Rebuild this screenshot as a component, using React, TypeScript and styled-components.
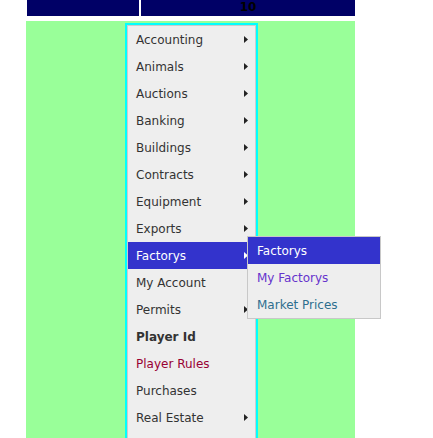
import React from "react";
import styled, { createGlobalStyle } from "styled-components";

const GlobalStyle = createGlobalStyle`
  html, body {
    margin: 0;
    padding: 0;
    background: #fff;
    overflow: hidden;
  }
  body {
    font-family: "DejaVu Sans", Verdana, sans-serif;
    font-size: 12px;
  }
`;

type Item = {
  label: string;
  sub?: boolean;
  bold?: boolean;
  color?: string;
  active?: boolean;
};

const items: Item[] = [
  { label: "Accounting", sub: true },
  { label: "Animals", sub: true },
  { label: "Auctions", sub: true },
  { label: "Banking", sub: true },
  { label: "Buildings", sub: true },
  { label: "Contracts", sub: true },
  { label: "Equipment", sub: true },
  { label: "Exports", sub: true },
  { label: "Factorys", sub: true, active: true },
  { label: "My Account" },
  { label: "Permits", sub: true },
  { label: "Player Id", bold: true },
  { label: "Player Rules", color: "#990033" },
  { label: "Purchases" },
  { label: "Real Estate", sub: true },
];

const subItems: Item[] = [
  { label: "Factorys", active: true },
  { label: "My Factorys", color: "#6633cc" },
  { label: "Market Prices", color: "#2e6e8e" },
];

export default function App() {
  return (
    <>
      <GlobalStyle />
      <Page>
        <Header>
          <HeadCell width="112px" />
          <HeadCell width="214px">10</HeadCell>
        </Header>
        <Content>
          <Menu>
            {items.map((it) => (
              <MenuItem key={it.label} $active={it.active} $bold={it.bold} $color={it.color}>
                {it.label}
                {it.sub && <Arrow $active={it.active} />}
                {it.active && (
                  <SubMenu>
                    {subItems.map((s) => (
                      <SubItem key={s.label} $active={s.active} $color={s.color}>
                        {s.label}
                      </SubItem>
                    ))}
                  </SubMenu>
                )}
              </MenuItem>
            ))}
          </Menu>
        </Content>
      </Page>
    </>
  );
}

const Page = styled.div`
  margin-left: 26px;
  width: 329px;
  display: flex;
  flex-direction: column;
  gap: 5px;
`;

const Header = styled.div`
  display: flex;
  gap: 2px;
  padding-left: 1px;
`;

const HeadCell = styled.div<{ width: string }>`
  width: ${(p) => p.width};
  height: 16px;
  line-height: 14px;
  background: #000066;
  color: #000;
  font-weight: bold;
  font-size: 12px;
  text-align: center;
`;

const Content = styled.div`
  background: #99ff99;
  padding-top: 2px;
  height: 460px;
`;

const Menu = styled.div`
  margin-left: 99px;
  width: 127px;
  border: 2px solid #00ffff;
  outline: 1px solid #cccccc;
  outline-offset: -3px;
  padding: 1px;
  padding-bottom: 30px;
  background: #eeeeee;
  display: flex;
  flex-direction: column;
`;

const MenuItem = styled.div<{ $active?: boolean; $bold?: boolean; $color?: string }>`
  position: relative;
  box-sizing: border-box;
  height: 27px;
  padding-top: 2px;
  line-height: 25px;
  padding-left: 8px;
  color: ${(p) => (p.$active ? "#fff" : p.$color || "#333333")};
  background: ${(p) => (p.$active ? "#3333cc" : "transparent")};
  font-weight: ${(p) => (p.$bold ? "bold" : "normal")};
  white-space: nowrap;
`;

const Arrow = styled.span<{ $active?: boolean }>`
  position: absolute;
  right: 7px;
  top: 10px;
  width: 4px;
  height: 7px;
  background: ${(p) => (p.$active ? "#fff" : "#222")};
  clip-path: polygon(0 0, 100% 50%, 0 100%);
`;

const SubMenu = styled.div`
  position: absolute;
  top: -6px;
  left: 119px;
  width: 132px;
  border: 1px solid #c8c8c8;
  background: #eeeeee;
  z-index: 2;
  display: flex;
  flex-direction: column;
`;

const SubItem = styled.div<{ $active?: boolean; $color?: string }>`
  box-sizing: border-box;
  height: 27px;
  padding-top: 2px;
  line-height: 25px;
  padding-left: 9px;
  color: ${(p) => (p.$active ? "#fff" : p.$color || "#333333")};
  background: ${(p) => (p.$active ? "#3333cc" : "transparent")};
  white-space: nowrap;
`;
